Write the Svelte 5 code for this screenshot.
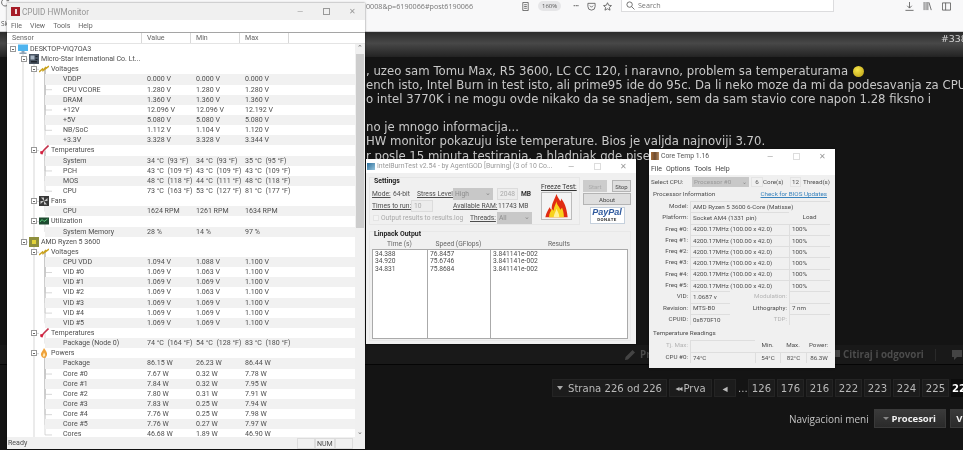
<script>
	const ROW = 10.155;
	const v = (label, value, min, max) => ({ lvl: 3, label, value, min, max });
	const rows = [
		{ lvl: 0, label: 'DESKTOP-VIQ7OA3', icon: 'pc' },
		{ lvl: 1, label: 'Micro-Star International Co. Lt...', icon: 'mb' },
		{ lvl: 2, label: 'Voltages', icon: 'volt' },
		v('VDDP', '0.000 V', '0.000 V', '0.000 V'),
		v('CPU VCORE', '1.280 V', '1.280 V', '1.280 V'),
		v('DRAM', '1.360 V', '1.360 V', '1.360 V'),
		v('+12V', '12.096 V', '12.096 V', '12.192 V'),
		v('+5V', '5.080 V', '5.080 V', '5.080 V'),
		v('NB/SoC', '1.112 V', '1.104 V', '1.120 V'),
		v('+3.3V', '3.328 V', '3.328 V', '3.344 V'),
		{ lvl: 2, label: 'Temperatures', icon: 'temp' },
		v('System', '34 °C  (93 °F)', '34 °C  (93 °F)', '35 °C  (95 °F)'),
		v('PCH', '43 °C  (109 °F)', '43 °C  (109 °F)', '43 °C  (109 °F)'),
		v('MOS', '48 °C  (118 °F)', '44 °C  (111 °F)', '48 °C  (118 °F)'),
		v('CPU', '73 °C  (163 °F)', '53 °C  (127 °F)', '81 °C  (177 °F)'),
		{ lvl: 2, label: 'Fans', icon: 'fan' },
		v('CPU', '1624 RPM', '1261 RPM', '1634 RPM'),
		{ lvl: 2, label: 'Utilization', icon: 'util' },
		v('System Memory', '28 %', '14 %', '97 %'),
		{ lvl: 1, label: 'AMD Ryzen 5 3600', icon: 'cpu' },
		{ lvl: 2, label: 'Voltages', icon: 'volt' },
		v('CPU VDD', '1.094 V', '1.088 V', '1.100 V'),
		v('VID #0', '1.069 V', '1.063 V', '1.100 V'),
		v('VID #1', '1.069 V', '1.069 V', '1.100 V'),
		v('VID #2', '1.069 V', '1.063 V', '1.100 V'),
		v('VID #3', '1.069 V', '1.069 V', '1.100 V'),
		v('VID #4', '1.069 V', '1.069 V', '1.100 V'),
		v('VID #5', '1.069 V', '1.069 V', '1.100 V'),
		{ lvl: 2, label: 'Temperatures', icon: 'temp' },
		v('Package (Node 0)', '74 °C  (164 °F)', '54 °C  (128 °F)', '83 °C  (180 °F)'),
		{ lvl: 2, label: 'Powers', icon: 'power' },
		v('Package', '86.15 W', '26.23 W', '86.44 W'),
		v('Core #0', '7.67 W', '0.32 W', '7.78 W'),
		v('Core #1', '7.84 W', '0.32 W', '7.95 W'),
		v('Core #2', '7.80 W', '0.31 W', '7.91 W'),
		v('Core #3', '7.83 W', '0.25 W', '7.94 W'),
		v('Core #4', '7.76 W', '0.25 W', '7.98 W'),
		v('Core #5', '7.76 W', '0.27 W', '7.97 W'),
		v('Cores', '46.68 W', '1.89 W', '46.90 W')
	];

	// stripes restart at each sensor group
	let n = 0;
	for (const r of rows) {
		if (r.lvl < 3) n = 0;
		else r.striped = n++ % 2 === 0;
	}

	// tree guide lines, one path per depth
	const mid = (i) => (i + 0.5) * ROW;
	let guides = '';
	const lastOf = (lvl) => rows.reduce((a, r, i) => (r.lvl === lvl ? i : a), 0);
	guides += `M16 ${mid(0)}V${mid(lastOf(1))}`;
	guides += `M27 ${mid(1)}V${rows.length * ROW}`;
	rows.forEach((r, i) => {
		if (r.lvl === 1) guides += `M16 ${mid(i)}h5`;
		if (r.lvl === 2) guides += `M27 ${mid(i)}h5`;
		if (r.lvl === 3) {
			let p = i;
			while (rows[p].lvl === 3) p--;
			guides += `M38 ${mid(p)}V${mid(i)}M38 ${mid(i)}h7`;
		}
	});

	const freqs = [0, 1, 2, 3, 4, 5];
	const pages = ['126', '176', '216', '222', '223', '224', '225'];
</script>

<div class="page">
	<header class="toolbar">
		<div class="urlrow">
			<svg class="tb refresh" viewBox="0 0 10 10"><path d="M8.500 6a4 4 0 1 1-.6-3.400M8.500 .5v2.500H6" /></svg>
			<div class="url">0008&amp;p=6190066#post6190066</div>
			<svg class="tb reader" viewBox="0 0 10 10"><path d="M2 .5h6v9H2zM3.500 3h3M3.500 5h3M3.500 7h3" /></svg>
			<span class="zoompill">160%</span>
			<span class="dots">•••</span>
			<svg class="tb" viewBox="0 0 10 10"><path d="M1 1.500h8V5a4 4 0 0 1-8 0zM3.200 4 5 5.800 6.800 4" /></svg>
			<svg class="tb star" viewBox="0 0 10 10"><path d="M5 .8 6.300 3.600 9.400 4 7.100 6 7.800 9.100 5 7.500 2.200 9.100 2.900 6 .6 4 3.700 3.600z" /></svg>
			<div class="search">
				<svg class="tb mag" viewBox="0 0 10 10"><circle cx="4" cy="4" r="3" /><path d="M6.200 6.200 9.400 9.400" /></svg>
				<span>Search</span>
			</div>
			<svg class="tb dl" viewBox="0 0 10 10"><path d="M5 0v6.500M2.500 4.200 5 6.800l2.500-2.600M.5 9.300h9" /></svg>
			<svg class="tb lib" viewBox="0 0 10 10"><path d="M1.200 0v9M3.400 0v9M5.400 0v9M6.600 .4l2.600 8.600" /></svg>
			<svg class="tb side" viewBox="0 0 10 10"><path d="M.5 1h9v8h-9zM4 1v8" /></svg>
		</div>
		<div class="bookmarks">Sk</div>
	</header>

	<div class="posthead">#338</div>

	<section class="postbody">
		<p>, uzeo sam Tomu Max, R5 3600, LC CC 120, i naravno, problem sa temperaturama <span class="smiley"></span></p>
		<p>ench isto, Intel Burn in test isto, ali prime95 ide do 95c. Da li neko moze da mi da podesavanja za CPU</p>
		<p>o intel 3770K i ne mogu ovde nikako da se snadjem, sem da sam stavio core napon 1.28 fiksno i</p>
		<p>&nbsp;</p>
		<p>no je mnogo informacija...</p>
		<p>HW monitor pokazuju iste temperature. Bios je valjda najnoviji 3.70.</p>
		<p>r posle 15 minuta testiranja, a hladnjak gde pise</p>
	</section>

	<div class="postfoot">
		<svg class="pencil" viewBox="0 0 12 12"><path d="M1 11l.6-3L8.500 1l2.500 2.500L4 10.500z" /></svg>
		<span class="pr">Pr</span>
		<span class="spacer"></span>
		<svg class="bubble" viewBox="0 0 12 12"><path d="M1 1h10v7H6l-3 3V8H1z" /></svg>
		<span class="quote">Citiraj i odgovori</span>
		<i class="footsep"></i>
		<svg class="bubble" viewBox="0 0 12 12"><path d="M1 1h10v7H6l-3 3V8H1z" /></svg>
	</div>

	<nav class="pager">
		<span class="pg wide"><i class="tri"></i>Strana 226 od 226</span>
		<span class="pg first"><small>◂◂</small>Prva</span>
		<span class="pg arrow">◂</span>
		<span class="ell">...</span>
		{#each pages as p}
			<span class="pg num">{p}</span>
		{/each}
		<span class="pg num cur">226</span>
	</nav>

	<div class="navmenu">
		<span>Navigacioni meni</span>
		<span class="navbtn"><i class="tri small"></i>Procesori</span>
		<span class="navbtn">Vi</span>
	</div>

	<!-- desktop windows floating over the browser -->
	<div class="win hw">
		<div class="title">
			<span class="hwlogo"><i></i></span>
			<span class="ttext">CPUID HWMonitor</span>
			<span class="caps"><i>—</i><i class="sq"></i><i>✕</i></span>
		</div>
		<div class="menu"><span>File</span><span>View</span><span>Tools</span><span>Help</span></div>
		<div class="cols">
			<span>Sensor</span><span>Value</span><span>Min</span><span>Max</span><span></span>
		</div>
		<div class="treewrap">
			<div class="tree">
				<svg class="guides" width="60" height={rows.length * ROW}><path d={guides} /></svg>
				{#each rows as r}
					<div class="row l{r.lvl}" class:striped={r.striped}>
						<div class="name">
							{#if r.lvl < 3}
								<i class="pm"></i>
								<svg class="ico" viewBox="0 0 10 10">
									{#if r.icon === 'pc'}
										<path d="M0 .5h10v6.500H0z" fill="#4fb4ee" /><path d="M3.500 7h3v1.500h2V10h-7V8.500h2z" fill="#8fa3b5" />
									{:else if r.icon === 'mb'}
										<path d="M0 0h10v10H0z" fill="#4a5563" /><path d="M1.500 1.500h4v4h-4z" fill="#a9b6c4" /><path d="M6.500 2h2v1h-2zM6.500 5h2v1h-2zM2 7h6v1.500H2z" fill="#20262e" />
									{:else if r.icon === 'volt'}
										<path d="M0 8 3.500 5 4 6.500 7 3l-.5 1.800L10 2" fill="none" stroke="#c9a21f" stroke-width="1.500" />
									{:else if r.icon === 'temp'}
										<path d="M9.500.5 4 6" stroke="#c4314b" stroke-width="1.600" /><path d="M1 6.500 5 5.500 3.500 9.500 1.500 9z" fill="#d3213f" />
									{:else if r.icon === 'fan'}
										<path d="M0 0h10v10H0z" fill="#3a3a3a" /><path d="M5 5 2 1.500h3zM5 5l3.500-3v3zM5 5l3 3.500H5zM5 5l-3.500 3V5z" fill="#c8c8c8" />
									{:else if r.icon === 'util'}
										<path d="M0 1.500h10v7H0z" fill="#1f4a30" /><path d="M1 6 3 3.500 5 5.500 8.500 3" fill="none" stroke="#58c878" />
									{:else if r.icon === 'cpu'}
										<path d="M0 0h10v10H0z" fill="#8e8f3c" /><path d="M3 3h4v4H3z" fill="#e3d338" />
									{:else}
										<path d="M5 0C7 3 8.500 4.500 8 7c-.4 2-2 3-3 3S2.400 9 2 7C1.600 5 3.500 3.500 5 0z" fill="#efa23a" /><path d="M5 4.500C6 6 6.500 7 6 8s-2 1-2.200 0C3.600 7 4.500 6 5 4.500z" fill="#fde7b5" />
									{/if}
								</svg>
							{/if}
							<span>{r.label}</span>
						</div>
						{#if r.lvl === 3}
							<span>{r.value}</span><span>{r.min}</span><span>{r.max}</span>
						{/if}
					</div>
				{/each}
			</div>
			<div class="sbar">
				<span class="sarrow">⌃</span>
				<div class="thumb"></div>
				<span class="sarrow down">⌄</span>
			</div>
		</div>
		<div class="status">
			<span class="ready">Ready</span>
			<span class="panel"></span><span class="panel wide2">NUM</span><span class="panel"></span>
		</div>
	</div>

	<div class="win ibt">
		<div class="title">
			<span class="ibtlogo"></span>
			<span class="ttext">IntelBurnTest v2.54 - by AgentGOD [Burning] (3 of 10 Co...</span>
			<span class="caps"><i>—</i><i class="sq faint"></i><i>✕</i></span>
		</div>
		<div class="ibtbody">
			<div class="ibttop">
				<div class="settings">
					<div class="gtitle">Settings</div>
					<div class="form">
						<div class="frow">
							<u class="w21">Mode:</u><span class="w24">64-bit</span><u class="w36">Stress Level:</u>
							<span class="sel high">High<i>⌄</i></span><span class="inp mb">2048</span><b>MB</b>
						</div>
						<div class="frow">
							<u class="w39">Times to run:</u><span class="inp ten">10</span><u class="w45">Available RAM:</u><span>11743 MB</span>
						</div>
						<div class="frow">
							<span class="chk"><i></i>Output results to results.log</span><u class="w27">Threads:</u><span class="sel all">All<i>⌄</i></span>
						</div>
					</div>
					<div class="freeze">
						<u>Freeze Test:</u>
						<div class="flamebox">
							<svg viewBox="0 0 30 28">
								<path d="M15 1c1 4 3 5 4 8 1-1 1-2 1-3 3 4 6 9 7 20H3c1-5 3-8 5-11 0 2 1 3 2 3-1-6 3-11 5-17z" fill="#e02c12" />
								<path d="M15 9c0 4 3 5 4 9l2-2c1 3 2 6 2 10H7c0-4 2-6 3-9l2 2c0-4 2-6 3-10z" fill="#f8d21d" />
								<path d="M15 17c1 3 3 5 3 9h-6c0-3 2-5 3-9z" fill="#fff29a" />
							</svg>
						</div>
					</div>
				</div>
				<div class="btns">
					<span class="btn off">Start</span><span class="btn">Stop</span>
					<span class="btn about">About</span>
					<div class="paypal"><b>PayPal</b><span>DONATE</span></div>
				</div>
			</div>
			<div class="linpack">
				<div class="gtitle lp">Linpack Output</div>
				<div class="lhead"><span>Time (s)</span><span>Speed (GFlops)</span><span>Results</span></div>
				<div class="lbox">
					<div>34.388<br />34.920<br />34.831</div>
					<div>76.8457<br />75.6746<br />75.8684</div>
					<div>3.841141e-002<br />3.841141e-002<br />3.841141e-002</div>
				</div>
			</div>
		</div>
	</div>

	<div class="win ct">
		<div class="title">
			<span class="ctlogo"></span>
			<span class="ttext">Core Temp 1.16</span>
			<span class="caps"><i>—</i><i class="sq faint"></i><i>✕</i></span>
		</div>
		<div class="menu"><span>File</span><span>Options</span><span>Tools</span><span>Help</span></div>
		<div class="ctbody">
			<div class="selrow">
				<span class="sc">Select CPU:</span>
				<span class="sel proc">Processor #0<i>⌄</i></span>
				<span class="cell small">6</span><span class="w23">Core(s)</span>
				<span class="cell small twelve">12</span><span>Thread(s)</span>
			</div>
			<div class="pinfo"><span>Processor Information</span><a href="#bios">Check for BIOS Updates</a></div>
			<div class="grid">
				<label>Model:</label><span class="cell span3">AMD Ryzen 5 3600 6-Core (Matisse)</span>
				<label>Platform:</label><span class="cell span2">Socket AM4 (1331 pin)</span><span class="loadh">Load</span>
				{#each freqs as f}
					<label>Freq #{f}:</label><span class="cell span2">4200.17MHz (100.00 x 42.0)</span><span class="cell">100%</span>
				{/each}
				<label>VID:</label><span class="cell">1.0687 v</span><span class="mod dim">Modulation:</span><span class="cell"></span>
				<label>Revision:</label><span class="cell">MTS-B0</span><span class="mod">Lithography:</span><span class="cell">7 nm</span>
				<label>CPUID:</label><span class="cell">0x870F10</span><span class="mod dim">TDP:</span><span class="cell"></span>
			</div>
			<div class="treadings">Temperature Readings</div>
			<div class="tgrid">
				<label class="dim">Tj. Max:</label><span class="cell"></span><span class="th">Min.</span><span class="th">Max.</span><span class="th">Power:</span>
				<label>CPU #0:</label><span class="cell">74°C</span><span class="cell c">54°C</span><span class="cell c">82°C</span><span class="cell c">86.3W</span>
			</div>
		</div>
	</div>
</div>

<style>
	:global(body) {
		background: #141414;
	}

	.page {
		position: relative;
		width: 963px;
		height: 450px;
		overflow: hidden;
		background: #141414;
		font-family: 'DejaVu Sans', sans-serif;
		filter: blur(0.45px);
	}

	/* browser chrome */
	.toolbar {
		height: 32px;
		box-sizing: border-box;
		background: #f8f8f9;
		border-bottom: 1px solid #cfcfd1;
	}

	.urlrow {
		display: flex;
		align-items: center;
		height: 12px;
		padding-left: 1px;
		color: #777;
		font: 7.200px 'Open Sans', sans-serif;
		white-space: nowrap;
	}

	.urlrow > * {
		flex: none;
	}

	.refresh {
		margin: -8px 356px 0 0;
	}

	.url {
		width: 155px;
	}

	.tb {
		width: 9px;
		height: 9px;
		fill: none;
		stroke: #555;
		stroke-width: 0.900;
	}

	.zoompill {
		margin-left: 8px;
		padding: 1px 4px;
		border-radius: 6px;
		background: #e6e6e8;
		font-size: 6px;
		color: #555;
	}

	.dots {
		margin: 0 8px 0 12px;
		font-size: 5px;
		color: #444;
	}

	.star {
		margin-left: 7px;
	}

	.search {
		display: flex;
		align-items: center;
		gap: 3px;
		box-sizing: border-box;
		width: 213px;
		height: 13px;
		margin: -1px 0 0 9px;
		padding-left: 4px;
		background: #fff;
		border: 1px solid #dcdcde;
		border-top: 0;
	}

	.dl {
		margin-left: 71px;
	}

	.lib {
		margin-left: 9px;
	}

	.side {
		margin-left: 10px;
	}

	.bookmarks {
		padding: 7px 0 0 1px;
		color: #555;
		font: 6.500px/9px 'Open Sans', sans-serif;
	}

	.posthead {
		box-sizing: border-box;
		height: 25px;
		padding: 1px 0 0 941px;
		background: linear-gradient(#2c2c2c, #484848 45%, #232323);
		color: #d4d4d4;
		font-size: 9.400px;
		line-height: 12px;
		white-space: nowrap;
	}

	.postbody {
		height: 288px;
		box-sizing: border-box;
		padding: 7px 0 0 366px;
		color: #c8c8c8;
		font-size: 11.700px;
		line-height: 14.100px;
		white-space: nowrap;
		overflow: hidden;
	}

	.postbody p {
		margin: 0;
	}

	.smiley {
		display: inline-block;
		width: 11px;
		height: 11px;
		margin-left: 1px;
		vertical-align: -2px;
		border-radius: 50%;
		background: radial-gradient(circle at 40% 35%, #f6e64a, #b79a12);
	}

	.postfoot {
		display: flex;
		align-items: center;
		box-sizing: border-box;
		height: 20px;
		padding-left: 624px;
		background: #191919;
		color: #4c4c4c;
		font: bold 9.800px 'Open Sans', sans-serif;
		border-bottom: 1px solid #050505;
		white-space: nowrap;
	}

	.pencil,
	.bubble {
		flex: none;
		width: 12px;
		height: 12px;
		fill: #444;
	}

	.pr {
		margin-left: 4px;
	}

	.spacer {
		width: 186px;
	}

	.quote {
		flex: none;
		margin-left: 2px;
		width: 90px;
	}

	.footsep {
		flex: none;
		width: 1px;
		height: 12px;
		margin: 0 15px 0 2px;
		background: #2a2a2a;
	}

	.pager {
		display: flex;
		gap: 2px;
		align-items: center;
		height: 18px;
		margin-top: 14px;
		padding-left: 552px;
		font-size: 10.100px;
		color: #b9b9b9;
		white-space: nowrap;
	}

	.pg {
		display: flex;
		flex: none;
		align-items: center;
		justify-content: center;
		box-sizing: border-box;
		height: 18px;
		background: #1c1c1c;
		border: 1px solid #242424;
	}

	.wide {
		width: 115px;
		gap: 5px;
	}

	.first {
		width: 43px;
	}

	.first small {
		font-size: 8px;
		letter-spacing: -1px;
		margin-right: 2px;
	}

	.arrow {
		width: 22px;
	}

	.ell {
		flex: none;
		width: 8px;
	}

	.num {
		width: 27px;
	}

	.pg.cur {
		background: #0c0c0c;
		border-color: #0c0c0c;
		color: #fff;
		font-weight: bold;
		justify-content: flex-start;
		width: 30px;
	}

	.tri {
		display: block;
		flex: none;
		width: 0;
		height: 0;
		border-style: solid;
		border-color: #a8a8a8 transparent transparent;
		border-width: 4px 3.500px 0;
	}

	.tri.small {
		margin-right: 2px;
		border-width: 3px 3px 0;
		border-top-color: #888;
	}

	.navmenu {
		display: flex;
		align-items: center;
		gap: 4px;
		height: 19px;
		margin-top: 12px;
		padding-left: 789px;
		color: #c4c4c4;
		font: 10px 'Open Sans', sans-serif;
		white-space: nowrap;
	}

	.navbtn {
		display: flex;
		align-items: center;
		justify-content: center;
		box-sizing: border-box;
		flex: none;
		width: 72px;
		height: 19px;
		margin-left: 1px;
		background: linear-gradient(#3a3a3a, #2a2a2a);
		border: 1px solid #3a3a3a;
		color: #f2f2f2;
		font-weight: bold;
		font-size: 9.500px;
	}

	.navbtn + .navbtn {
		margin-left: 0;
		padding-right: 50px;
	}

	/* windows */
	.win {
		position: absolute;
		box-sizing: border-box;
		background: #fff;
		color: #4e4e4e;
		font: 7.050px Roboto, sans-serif;
		white-space: nowrap;
		box-shadow: 0 0 2px rgba(0, 0, 0, 0.5);
	}

	.title {
		display: flex;
		align-items: center;
		height: 17px;
		color: #969696;
		font-size: 8.200px;
	}

	.ttext {
		margin-left: 2px;
	}

	.caps {
		display: flex;
		margin-left: auto;
		color: #999;
		font-size: 8px;
	}

	.caps i {
		display: flex;
		align-items: center;
		justify-content: center;
		width: 26px;
		font-style: normal;
	}

	.caps .sq::before {
		content: '';
		width: 5px;
		height: 5px;
		border: 1px solid #999;
	}

	.caps .faint::before {
		border-color: #ddd;
	}

	.menu {
		display: flex;
		align-items: center;
		box-sizing: border-box;
		background: #fff;
		color: #666;
		font-size: 7px;
	}

	.hw {
		left: 7px;
		top: 3px;
		width: 358px;
		height: 446px;
		background: #f0f0f0;
	}

	.hwlogo {
		display: flex;
		align-items: center;
		justify-content: center;
		width: 9px;
		height: 9px;
		margin-left: 4px;
		background: #a61c28;
	}

	.hwlogo i {
		width: 2px;
		height: 5px;
		background: #f3d8da;
	}

	.hw .menu {
		gap: 8px;
		height: 12px;
		padding-left: 4px;
	}

	.cols {
		display: grid;
		grid-template-columns: 135px 49px 49px 49px 1fr;
		box-sizing: border-box;
		height: 11px;
		border-top: 1px solid #a5a5a5;
		background: #fff;
		color: #666;
		line-height: 10px;
	}

	.cols span {
		padding-left: 5px;
		border-right: 1px solid #d8d8d8;
		height: 10px;
	}

	.cols span:last-child {
		border: 0;
	}

	.treewrap {
		display: flex;
		box-sizing: border-box;
		height: 394px;
		background: #fff;
		overflow: hidden;
		border-top: 1px solid #e4e4e4;
	}

	.tree {
		position: relative;
		flex: 1;
		min-width: 0;
	}

	.guides {
		position: absolute;
		left: 0;
		top: 0;
	}

	.guides path {
		fill: none;
		stroke: #c6c6c6;
		stroke-width: 0.700;
	}

	.row {
		position: relative;
		display: grid;
		grid-template-columns: 135px 49px 49px 49px;
		height: 10.155px;
		line-height: 10.155px;
		white-space: pre;
	}

	.row > span {
		padding-left: 5px;
	}

	.striped {
		background: linear-gradient(to right, transparent 38px, #f1f1f1 38px);
	}

	.name {
		display: flex;
		align-items: center;
		grid-column: 1;
	}

	.l0 .name {
		padding-left: 3px;
		grid-column: 1 / -1;
	}

	.l1 .name {
		padding-left: 14px;
		grid-column: 1 / -1;
	}

	.l2 .name {
		padding-left: 24px;
		grid-column: 1 / -1;
	}

	.l3 .name {
		padding-left: 56px;
	}

	.pm {
		position: relative;
		box-sizing: border-box;
		flex: none;
		width: 6px;
		height: 6px;
		margin-right: 2px;
		background: #fff;
		border: 0.700px solid #999;
	}

	.pm::after {
		content: '';
		position: absolute;
		left: 0.800px;
		right: 0.800px;
		top: 1.800px;
		height: 0.800px;
		background: #666;
	}

	.ico {
		flex: none;
		width: 10px;
		height: 10px;
		margin-right: 2px;
	}

	.sbar {
		display: flex;
		flex-direction: column;
		flex: none;
		width: 10px;
		background: #f0f0f0;
		color: #666;
		font-size: 7px;
		line-height: 9px;
		text-align: center;
	}

	.thumb {
		width: 8px;
		height: 174px;
		margin: 1px 0 0 1px;
		background: #cdcdcd;
	}

	.sarrow {
		height: 9px;
	}

	.down {
		margin-top: auto;
	}

	.status {
		display: flex;
		align-items: center;
		height: 12px;
		background: #f0f0f0;
		line-height: 10px;
	}

	.ready {
		flex: none;
		margin-left: 1px;
		width: 289px;
	}

	.panel {
		box-sizing: border-box;
		flex: none;
		width: 18px;
		height: 11px;
		border: 1px solid #dcdcdc;
	}

	.wide2 {
		width: 20px;
		padding-left: 1px;
	}

	.ibt {
		left: 366px;
		top: 159px;
		width: 270px;
		height: 185px;
		background: #f0f0f0;
		font-size: 6.700px;
	}

	.ibt .title {
		height: 14px;
		background: #fff;
		font-size: 6.900px;
		color: #9a9a9a;
	}

	.ibtlogo {
		width: 8px;
		height: 7px;
		margin-left: 1px;
		background: linear-gradient(135deg, #2a6d9a, #96c4dc);
	}

	.ctlogo {
		width: 8px;
		height: 8px;
		margin-left: 2px;
		background: linear-gradient(90deg, #a86f3a, #6c4a30 50%, #b58a60);
	}

	.ibtbody {
		padding: 4px 0 0 3px;
	}

	.ibttop {
		display: flex;
	}

	.settings {
		position: relative;
		display: flex;
		flex: none;
		box-sizing: border-box;
		width: 211px;
		height: 48px;
		padding: 10px 0 0 2px;
		border: 1px solid #e6e6e6;
	}

	.gtitle {
		position: absolute;
		left: 4px;
		top: -1px;
		color: #222;
		font-weight: bold;
		font-size: 6.900px;
		line-height: 8px;
	}

	.gtitle.lp {
		top: -2px;
	}

	.form {
		flex: none;
		width: 169px;
	}

	.frow {
		display: flex;
		align-items: center;
		height: 12px;
	}

	.frow > * {
		flex: none;
	}

	.w21 { width: 21px; }
	.w23 { width: 23px; }
	.w24 { width: 24px; }
	.w27 { width: 27px; }
	.w36 { width: 36px; }
	.w39 { width: 39px; }
	.w45 { width: 45px; }

	.sel {
		position: relative;
		display: flex;
		flex: none;
		align-items: center;
		box-sizing: border-box;
		height: 12px;
		padding-left: 2px;
		background: #c8c8c8;
		color: #8c8c8c;
	}

	.sel i {
		position: absolute;
		right: 2px;
		top: 1px;
		font-style: normal;
		color: #888;
	}

	.high {
		width: 40px;
		margin-right: 4px;
	}

	.all {
		width: 35px;
	}

	.inp {
		display: flex;
		align-items: center;
		box-sizing: border-box;
		height: 12px;
		padding-left: 2px;
		background: #ececec;
		border: 1px solid #dcdcdc;
		color: #aaa;
	}

	.mb {
		width: 21px;
		margin-right: 3px;
	}

	.frow b {
		color: #333;
	}

	.ten {
		width: 22px;
		margin-right: 20px;
	}

	.chk {
		display: flex;
		align-items: center;
		gap: 2px;
		width: 98px;
		color: #a8a8a8;
	}

	.chk i {
		box-sizing: border-box;
		width: 6px;
		height: 6px;
		margin-left: 1px;
		background: #f4f4f4;
		border: 1px solid #e4e4e4;
	}

	.freeze {
		flex: none;
		margin-top: -5px;
		color: #333;
	}

	.freeze u {
		display: block;
		height: 9px;
		line-height: 8px;
	}

	.flamebox {
		display: flex;
		box-sizing: border-box;
		width: 31px;
		height: 28px;
		background: #f4f4f4;
		border: 1px solid #bcbcbc;
	}

	.flamebox svg {
		width: 29px;
		height: 26px;
	}

	.btns {
		display: grid;
		grid-template-columns: 24px 19px;
		grid-template-rows: 12px 12px auto;
		column-gap: 5px;
		row-gap: 1px;
		justify-items: center;
		margin: 3px 0 0 3px;
	}

	.btn {
		display: flex;
		align-items: center;
		justify-content: center;
		box-sizing: border-box;
		width: 100%;
		height: 12px;
		background: #dedede;
		border: 1px solid #b4b4b4;
		font-size: 6px;
		color: #444;
	}

	.off {
		background: #ccc;
		border-color: #ccc;
		color: #aaa;
	}

	.about {
		grid-column: 1 / -1;
	}

	.paypal {
		grid-column: 1 / -1;
		display: flex;
		flex-direction: column;
		align-items: center;
		box-sizing: border-box;
		width: 35px;
		height: 17px;
		margin-top: 1px;
		background: #fff;
		border: 1px solid #c5d0dc;
	}

	.paypal b {
		color: #2f5a9e;
		font: italic bold 9px/9px 'Liberation Sans', sans-serif;
	}

	.paypal span {
		color: #333;
		font-size: 4.400px;
		font-weight: bold;
		letter-spacing: 0.400px;
		line-height: 6px;
	}

	.linpack {
		position: relative;
		box-sizing: border-box;
		width: 262px;
		height: 110px;
		margin-top: 6px;
		padding: 8px 0 0 2px;
		border: 1px solid #e8e8e8;
	}

	.lhead {
		display: grid;
		grid-template-columns: 55px 63px 138px;
		height: 9px;
		line-height: 9px;
		text-align: center;
		color: #666;
	}

	.lbox {
		display: grid;
		grid-template-columns: 55px 63px 136px;
		box-sizing: border-box;
		width: 256px;
		height: 90px;
		background: #fff;
		border: 1px solid #aaa;
		line-height: 7.300px;
	}

	.lbox div {
		padding: 1px 0 0 2px;
		border-right: 1px solid #aaa;
	}

	.lbox div:last-child {
		border: 0;
	}

	.ct {
		left: 649px;
		top: 149px;
		width: 186px;
		height: 219px;
		background: #f0f0f0;
		font-size: 6.250px;
	}

	.ct .title {
		height: 14px;
		background: #fff;
		color: #555;
		font-size: 6.850px;
	}

	.ct .menu {
		height: 12px;
		gap: 4px;
		padding-left: 2px;
		color: #444;
	}

	.ctbody {
		padding: 1px 5px 0 2px;
	}

	.selrow {
		display: flex;
		align-items: center;
		height: 12px;
	}

	.sc {
		flex: none;
		width: 41px;
	}

	.sel.proc {
		width: 57px;
		height: 10px;
		color: #999;
	}

	.cell {
		display: flex;
		align-items: center;
		box-sizing: border-box;
		min-width: 0;
		padding-left: 2px;
		border-left: 1px solid #dedede;
		border-top: 1px solid #dedede;
	}

	.cell.small {
		flex: none;
		justify-content: center;
		width: 12px;
		height: 10px;
		margin: 0 0 0 2px;
		padding: 0;
		border: 1px solid #e4e4e4;
	}

	.cell.twelve {
		width: 11px;
		margin: 0 2px 0 5px;
	}

	.pinfo {
		display: flex;
		justify-content: space-between;
		align-items: center;
		height: 12px;
		padding: 0 3px 0 2px;
	}

	.pinfo a {
		color: #3883bd;
		text-decoration: underline;
	}

	.grid {
		display: grid;
		grid-template-columns: 39px 40px 59px 41px;
		grid-auto-rows: 11.300px;
		margin-top: 1px;
		line-height: 11px;
	}

	label {
		text-align: right;
		padding-right: 2px;
	}

	.span2 {
		grid-column: span 2;
	}

	.span3 {
		grid-column: span 3;
	}

	.loadh {
		text-align: center;
	}

	.mod {
		text-align: right;
		padding-right: 2px;
	}

	.dim {
		color: #b4b4b4;
	}

	.treadings {
		height: 14px;
		margin-top: 1px;
		padding-left: 2px;
		line-height: 14px;
	}

	.tgrid {
		display: grid;
		grid-template-columns: 39px 65px 25px 26px 25px;
		grid-auto-rows: 11.500px;
		line-height: 11px;
	}

	.th {
		text-align: center;
	}

	.cell.c {
		justify-content: center;
		padding: 0;
	}
</style>
